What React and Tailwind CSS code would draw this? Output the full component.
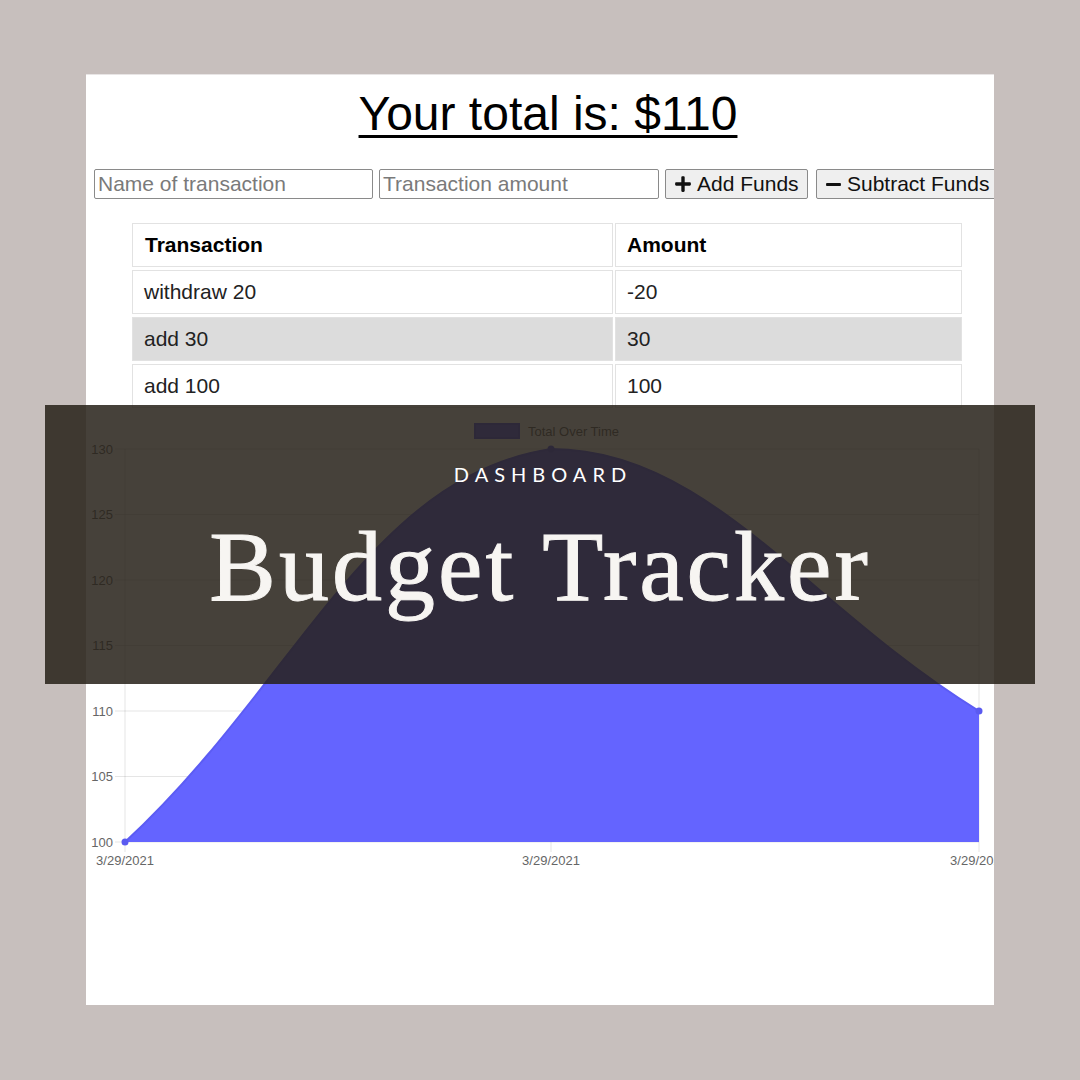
import React from "react";
import { FaPlus, FaMinus } from "react-icons/fa";

const rows = [
  { name: "withdraw 20", amount: "-20" },
  { name: "add 30", amount: "30" },
  { name: "add 100", amount: "100" },
];

const yTicks = [
  { label: "130", y: 34 },
  { label: "125", y: 99.5 },
  { label: "120", y: 165 },
  { label: "115", y: 230.5 },
  { label: "110", y: 296 },
  { label: "105", y: 361.5 },
  { label: "100", y: 427 },
];

const xTicks = [39, 465, 893];

const TotalChart = () => (
  <svg width="908" height="480" className="block" style={{ fontFamily: '"Liberation Sans", Arial, sans-serif' }}>
    {/* legend */}
    <rect x="389" y="9" width="44" height="14" fill="#6464ff" stroke="#5a5af0" strokeWidth="2" />
    <text x="442" y="20.5" fontSize="13" fill="#666">Total Over Time</text>

    {/* grid */}
    {yTicks.map((t) => (
      <g key={t.label}>
        <line x1="29" x2="893" y1={t.y} y2={t.y} stroke="rgba(0,0,0,0.1)" />
        <text x="27" y={t.y + 4.5} fontSize="13" fill="#666" textAnchor="end">
          {t.label}
        </text>
      </g>
    ))}
    {xTicks.map((x) => (
      <g key={x}>
        <line x1={x} x2={x} y1="34" y2="437" stroke="rgba(0,0,0,0.1)" />
        <text x={x} y="450" fontSize="13" fill="#666" textAnchor="middle">
          3/29/2021
        </text>
      </g>
    ))}

    {/* area */}
    <path
      d="M39,427 C209.4,269.8 281.9,62.1 465,34 C623.5,34 721.8,191.2 893,296 L893,427 Z"
      fill="#6464ff"
    />
    <path
      d="M39,427 C209.4,269.8 281.9,62.1 465,34 C623.5,34 721.8,191.2 893,296"
      fill="none"
      stroke="#5c5cf4"
      strokeWidth="2"
    />
    {[
      [39, 427],
      [465, 34],
      [893, 296],
    ].map(([cx, cy]) => (
      <circle key={cx} cx={cx} cy={cy} r="3.5" fill="#5a5af0" />
    ))}
  </svg>
);

export default function App() {
  return (
    <div
      className="relative w-[1080px] h-[1080px] overflow-hidden bg-[#c7bfbd] pt-[74px] pl-[86px]"
      style={{ fontFamily: '"Liberation Sans", Arial, sans-serif' }}
    >
      {/* Card */}
      <div className="w-[908px] h-[931px] bg-white border-t border-[#e8e5e5] overflow-hidden">
        <h1 className="pt-[15px] pl-[16px] text-center text-[48px] leading-none text-black">
          <span className="underline decoration-[3px] underline-offset-[5px]">Your total is: $110</span>
        </h1>

        {/* Form */}
        <div className="mt-[31px] pl-[8px] flex items-center whitespace-nowrap">
          <div className="w-[279px] h-[30px] shrink-0 border border-[#8a8a8a] rounded-[2px] flex items-center px-[3px] text-[21px] text-[#7a7a7a]">
            Name of transaction
          </div>
          <div className="ml-[6px] w-[280px] h-[30px] shrink-0 border border-[#8a8a8a] rounded-[2px] flex items-center px-[3px] text-[21px] text-[#7a7a7a]">
            Transaction amount
          </div>
          <button className="ml-[6px] h-[30px] shrink-0 w-[143px] border border-[#8a8a8a] rounded-[2px] bg-[#efefef] flex items-center pl-[8px] gap-[5px] text-[21px] text-[#111]">
            <FaPlus className="w-[18px] h-[18px]" />
            Add Funds
          </button>
          <button className="ml-[8px] h-[30px] shrink-0 border border-[#8a8a8a] rounded-[2px] bg-[#efefef] flex items-center pl-[8px] pr-[8px] gap-[5px] text-[21px] text-[#111]">
            <FaMinus className="w-[17px] h-[17px]" />
            Subtract Funds
          </button>
        </div>

        {/* Table */}
        <div className="mt-[24px] ml-[46px] grid grid-cols-[481px_347px] gap-x-[2px] gap-y-[3px] text-[21px]">
          <div className="h-[44px] border border-[#e2e2e2] pl-[12px] flex items-center font-bold text-black">Transaction</div>
          <div className="h-[44px] border border-[#e2e2e2] pl-[11px] flex items-center font-bold text-black">Amount</div>
          {rows.map((r, i) => (
            <React.Fragment key={r.name}>
              <div
                className={`h-[44px] border border-[#e2e2e2] pl-[11px] flex items-center text-[#222] ${
                  i === 1 ? "bg-[#dcdcdc]" : "bg-white"
                }`}
              >
                {r.name}
              </div>
              <div
                className={`h-[44px] border border-[#e2e2e2] pl-[11px] flex items-center text-[#222] ${
                  i === 1 ? "bg-[#dcdcdc]" : "bg-white"
                }`}
              >
                {r.amount}
              </div>
            </React.Fragment>
          ))}
        </div>

        {/* Chart */}
        <div className="mt-[7px]">
          <TotalChart />
        </div>
      </div>

      {/* Title band over the screenshot */}
      <div className="absolute left-[45px] top-[405px] w-[990px] h-[279px] bg-[rgba(38,32,24,0.85)] flex flex-col items-center">
        <div
          className="mt-[59px] text-[20px] leading-none tracking-[0.3em] pl-[0.3em] text-white"
          style={{ fontFamily: "Lato, sans-serif" }}
        >
          DASHBOARD
        </div>
        <div
          className="mt-[33px] text-[100px] leading-none tracking-[3px] text-[#f7f5f2] [-webkit-text-stroke:1px_#f7f5f2]"
          style={{ fontFamily: '"Liberation Serif", serif' }}
        >
          Budget Tracker
        </div>
      </div>
    </div>
  );
}
